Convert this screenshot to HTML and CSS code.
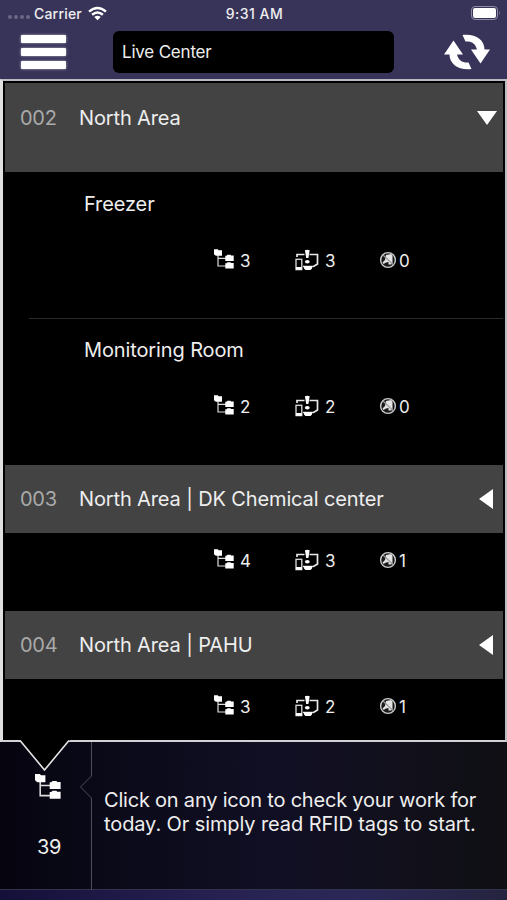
FILE: index.html
```
<!DOCTYPE html>
<html lang="en">
<head>
<meta charset="UTF-8">
<title>Live Center</title>
<link rel="stylesheet" href="styles.css">
</head>
<body>

<svg class="sprite">
	<symbol id="tree" viewBox="0 0 20 20">
		<path d="M4 5v12h8M4 9.300h8" fill="none" stroke="#ddd" stroke-width="1.200"/>
		<path d="M0 .3h3.800l.8 1H8v5.400H1.800L0 5.200zM11.300 6.800h1.200l1-1h3l.5.7h2.700v5.500h-8.400zM11.300 14.300h1.200l1-1h3l.5.7h2.700v5.500h-8.400z" fill="#fff"/>
	</symbol>
	<symbol id="device" viewBox="0 0 24 22">
		<path d="M2 8V5.500h7.500M14.500 5.500h8v9.500l-4 2.500H8" fill="none" stroke="#e8e8e8" stroke-width="1.700"/>
		<rect x="1" y="10.300" width="5.800" height="10.300" fill="#000" stroke="#ddd" stroke-width="1.300"/>
		<path d="M1 18h5.800v2.800H1zM9 17h8v2.500l-1.500 1.500H10.500L9 19.500z" fill="#fff"/>
		<path d="M9.900 1.300q2.400-1.300 4.800 0L13.400 9h-2.200z" fill="#fff"/>
		<ellipse cx="12.300" cy="12.800" rx="2.400" ry="1.800" fill="#fff"/>
	</symbol>
	<symbol id="blocked" viewBox="0 0 18 18">
		<circle cx="9" cy="9" r="7.400" fill="#1a1a1a" stroke="#ccc" stroke-width="1.400"/>
		<path d="M7 4l5-1 1.500 1.500v8l-1.500 1H9.500V11L7 11.500 4.500 13 3.500 11.500 6 9z" fill="#e4e4e4"/>
		<path d="M4 4l10.500 10" stroke="#999" stroke-width="1.100"/>
	</symbol>
</svg>

<div class="app">
	<div class="statusbar">
		<div class="carrier">
			<span class="dots"><i></i><i></i><i></i><i></i></span>
			<span class="carrier-name">Carrier</span>
			<svg class="wifi" viewBox="0 0 18 14">
				<path d="M1 5.200q8-7 16 0M3.900 8.200q5.100-4.300 10.200 0" fill="none" stroke="#fff" stroke-width="2.300"/>
				<path d="M5.900 10.400q3.100-2.500 6.200 0L9 13.500z" fill="#fff"/>
			</svg>
		</div>
		<div class="time">9:31 AM</div>
		<svg class="battery" viewBox="0 0 30 14">
			<rect x=".5" y=".5" width="26" height="13" rx="3.500" fill="none" stroke="#8c8ba5"/>
			<rect x="2" y="2" width="23" height="10" rx="2" fill="#fff"/>
			<path d="M28 5q1.700 2 0 4z" fill="#8c8ba5"/>
		</svg>
	</div>

	<div class="navbar">
		<div class="menu"><i></i><i></i><i></i></div>
		<div class="title">Live Center</div>
		<svg class="refresh" viewBox="0 0 46 36">
			<g id="arrow">
				<path d="M18.500 1C31 -.5 40.500 5.500 40.500 15.500H46L36.500 29.500 27 15.500h6C31.500 9.500 27.500 7 21.500 7.500z" fill="#fff"/>
			</g>
			<use href="#arrow" transform="rotate(180 23 18)"/>
		</svg>
	</div>

	<div class="panel">
		<div class="area area-open">
			<span class="num">002</span>
			<span class="name">North Area</span>
			<svg class="arrow-down" viewBox="0 0 20 14"><path d="M0 0h20L10 14z" fill="#fff"/></svg>
		</div>
		<div class="room">
			<div class="room-name">Freezer</div>
			<div class="counts">
				<span class="count c-tree"><svg><use href="#tree"/></svg>3</span>
				<span class="count c-device"><svg><use href="#device"/></svg>3</span>
				<span class="count c-blocked"><svg><use href="#blocked"/></svg>0</span>
			</div>
		</div>
		<div class="room room-line">
			<div class="room-name">Monitoring Room</div>
			<div class="counts">
				<span class="count c-tree"><svg><use href="#tree"/></svg>2</span>
				<span class="count c-device"><svg><use href="#device"/></svg>2</span>
				<span class="count c-blocked"><svg><use href="#blocked"/></svg>0</span>
			</div>
		</div>
		<div class="area">
			<span class="num">003</span>
			<span class="name">North Area | DK Chemical center</span>
			<svg class="arrow-left" viewBox="0 0 14 20"><path d="M14 0v20L0 10z" fill="#fff"/></svg>
		</div>
		<div class="summary">
			<div class="counts">
				<span class="count c-tree"><svg><use href="#tree"/></svg>4</span>
				<span class="count c-device"><svg><use href="#device"/></svg>3</span>
				<span class="count c-blocked"><svg><use href="#blocked"/></svg>1</span>
			</div>
		</div>
		<div class="area">
			<span class="num">004</span>
			<span class="name">North Area | PAHU</span>
			<svg class="arrow-left" viewBox="0 0 14 20"><path d="M14 0v20L0 10z" fill="#fff"/></svg>
		</div>
		<div class="summary summary-last">
			<div class="counts">
				<span class="count c-tree"><svg><use href="#tree"/></svg>3</span>
				<span class="count c-device"><svg><use href="#device"/></svg>2</span>
				<span class="count c-blocked"><svg><use href="#blocked"/></svg>1</span>
			</div>
		</div>
	</div>

	<div class="footer">
		<!-- pointer of the panel -->
		<svg class="pointer" viewBox="0 0 52 32"><path d="M1 0L2 1 25.500 30 50 1 51 0z" fill="#000"/><path d="M1 .5L25.500 30 50 .5" fill="none" stroke="#e4e4e4" stroke-width="1.600"/></svg>
		<div class="total">
			<svg class="total-icon"><use href="#tree"/></svg>
			<div class="total-num">39</div>
		</div>
		<svg class="divider" viewBox="0 0 14 148"><path d="M12.500 0v34L1.500 45l11 11v92" fill="none" stroke="#4e4d59"/></svg>
		<div class="hint"><span class="hint-first">Click on any icon to check your work for</span><br><span class="hint-second">today. Or simply read RFID tags to start.</span></div>
	</div>
	<div class="bottom"></div>
</div>

</body>
</html>
```

FILE: styles.css
```
* {
	box-sizing: border-box;
}
body {
	margin: 0;
	background: #383459;
	font-family: Inter, "Liberation Sans", sans-serif;
	color: #eee;
}
svg {
	display: block;
	flex: none;
}
.sprite {
	display: none;
}
.app {
	width: 507px;
	height: 900px;
	overflow: hidden;
	display: flex;
	flex-direction: column;
}

.statusbar {
	height: 27px;
	display: grid;
	grid-template-columns: 1fr auto 1fr;
	align-items: center;
	padding: 0 6px 1px 8px;
	font-size: 14px;
	font-weight: 500;
}
.carrier {
	display: flex;
	align-items: center;
}
.carrier-name {
	letter-spacing: 0.2px;
}
.time {
	letter-spacing: 0.5px;
}
.dots {
	display: flex;
	gap: 2px;
	padding-top: 7px;
	margin-right: 4px;
}
.dots i {
	width: 4px;
	height: 4px;
	border-radius: 50%;
	background: #6b6886;
}
.wifi {
	width: 19px;
	height: 15px;
	margin-left: 6px;
}
.battery {
	width: 30px;
	height: 14px;
	justify-self: end;
}

.navbar {
	height: 52px;
	display: flex;
	padding: 4px 17px 0 21px;
}
.menu {
	width: 45px;
	padding-top: 4px;
	display: flex;
	flex-direction: column;
	gap: 5px;
}
.menu i {
	height: 8px;
	background: #fff;
	border-radius: 1px;
	box-shadow: 0 0 3px rgba(255,255,255,0.6);
}
.title {
	width: 281px;
	height: 42px;
	margin-left: 47px;
	padding-left: 9px;
	border-radius: 6px;
	background: #000;
	font-size: 17px;
	line-height: 42px;
	letter-spacing: -0.2px;
}
.refresh {
	width: 46px;
	height: 36px;
	margin: 3px 0 0 auto;
}

.panel {
	height: 663px;
	border: 2px solid #b9bac4;
	border-left: 3px solid #e0e0e0;
	border-bottom-color: #d2d2d6;
	padding: 2px 2px 0;
	background: #000;
}
.area {
	height: 68px;
	display: flex;
	align-items: center;
	padding: 0 10px 0 15px;
	background: #434343;
	font-size: 20px;
}
.area-open {
	height: 89px;
	padding: 0 6px 19px 15px;
}
.num {
	width: 59px;
	color: #aaa;
	letter-spacing: -0.3px;
}
.name {
	flex: 1;
	white-space: nowrap;
	letter-spacing: -0.13px;
}
.arrow-down {
	width: 20px;
	height: 14px;
}
.arrow-left {
	width: 14px;
	height: 20px;
}
.room {
	height: 146px;
	padding-top: 20px;
}
.room-line {
	height: 147px;
	background: linear-gradient(#2b2b2b, #2b2b2b) 24px 0 / 100% 1px no-repeat;
	padding-top: 20px;
}
.room-name {
	height: 24px;
	padding-left: 79px;
	font-size: 20px;
	line-height: 24px;
	letter-spacing: -0.12px;
}
.room .counts {
	margin-top: 33px;
}
.counts {
	height: 24px;
	display: grid;
	grid-template-columns: 81px 84px 1fr;
	padding-left: 209px;
	font-size: 17px;
}
.count {
	display: flex;
	align-items: center;
}
.c-tree svg {
	width: 20px;
	height: 20px;
	margin: 0 6px 4px 0;
}
.c-device svg {
	width: 24px;
	height: 22px;
	margin: 0 6px 2px 0;
}
.c-blocked svg {
	width: 18px;
	height: 18px;
	margin: 0 2px 2px 0;
}
.summary {
	height: 78px;
	padding-top: 16px;
}
.summary-last {
	height: 62px;
}

.footer {
	position: relative;
	height: 147px;
	display: flex;
	background: linear-gradient(90deg, #05040f, #0c0b1b 28%, #110f24 55%, #11101b 80%, #0f0f14);
}
.pointer {
	position: absolute;
	left: 19px;
	top: -2px;
	width: 52px;
	height: 32px;
}
.total {
	width: 79px;
	padding: 31px 0 0 35px;
}
.total-icon {
	width: 26px;
	height: 27px;
}
.total-num {
	margin: 35px 0 0 2px;
	font-size: 20px;
	line-height: 24px;
	letter-spacing: -0.3px;
}
.divider {
	width: 14px;
	height: 148px;
}
.hint {
	padding: 46px 0 0 11px;
	font-size: 20px;
	line-height: 24px;
	white-space: nowrap;
}
.hint-first {
	letter-spacing: -0.21px;
}
.hint-second {
	letter-spacing: -0.1px;
}
.bottom {
	height: 11px;
	background: linear-gradient(90deg, #151039, #252050 40%, #2b2858 70%, #25243f);
	border-top: 1px solid #35324d;
}
```
